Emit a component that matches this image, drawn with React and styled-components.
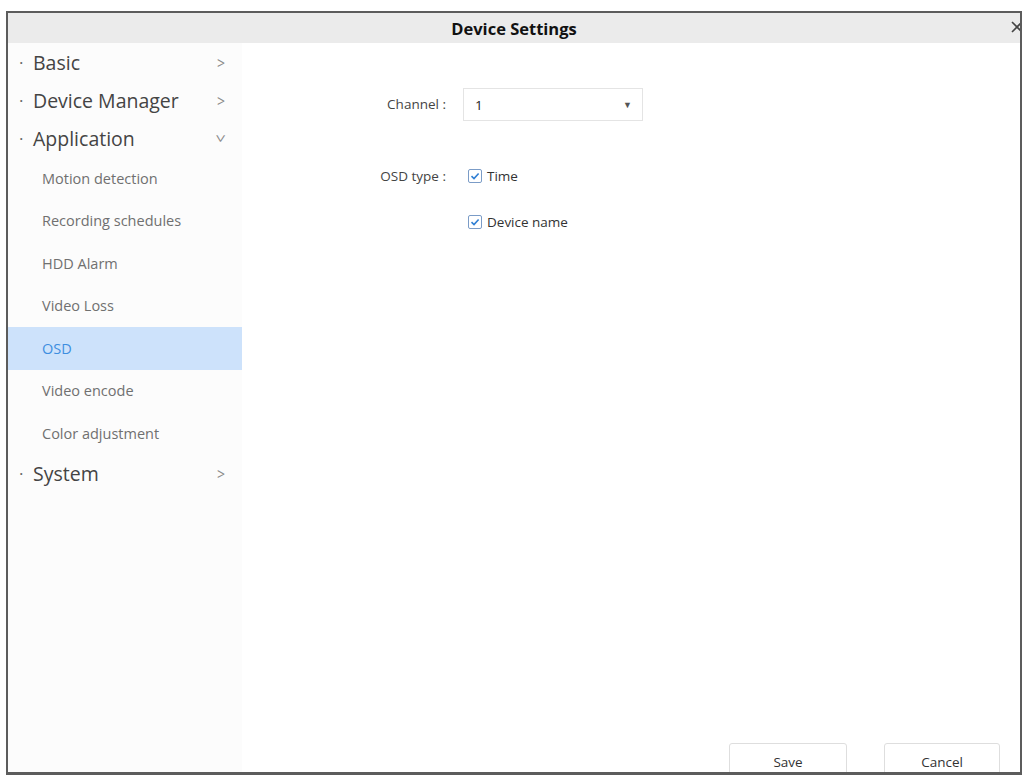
import React from 'react';
import styled, { createGlobalStyle } from 'styled-components';

const Global = createGlobalStyle`
  html, body { margin: 0; padding: 0; background: #fff; }
  body { font-family: "Open Sans", "Noto Sans", sans-serif; }
`;

const Frame = styled.div`
  position: relative;
  margin: 11px 0 0 6px;
  width: 1016px;
  height: 764px;
  box-sizing: border-box;
  border: 2px solid #5c5c5c;
  border-bottom-width: 3px;
  display: flex;
  flex-direction: column;
  overflow: hidden;
  background: #fff;
`;

const Header = styled.div`
  height: 30px;
  flex: none;
  background: #ebebeb;
  display: flex;
  align-items: center;
  justify-content: center;
  font-size: 16.5px;
  font-weight: 700;
  color: #111;
`;

const Close = styled.svg`
  position: absolute;
  top: 7px;
  right: -4px;
`;

const Body = styled.div`
  flex: 1;
  display: flex;
  min-height: 0;
`;

const Sidebar = styled.div`
  width: 234px;
  flex: none;
  background: #fcfcfc;
  display: flex;
  flex-direction: column;
`;

const TopItem = styled.div`
  height: 38px;
  display: flex;
  align-items: center;
  padding-left: 11px;
  padding-right: 16px;
  font-size: 19.5px;
  color: #444;
  span.dot { width: 14px; color: #666; font-size: 17px; }
  span.label { flex: 1; }
`;

const Chevron = styled.span`
  font-size: 14px;
  color: #8a8a8a;
  transform: ${p => (p.open ? 'rotate(90deg) scaleY(1.3)' : 'scaleY(1.2)')};
  width: 10px;
  text-align: center;
`;

const SubItem = styled.div`
  height: 42.5px;
  display: flex;
  align-items: center;
  padding-left: 34px;
  font-size: 14.5px;
  color: ${p => (p.active ? '#3d8ee0' : '#707070')};
  background: ${p => (p.active ? '#cde2fb' : 'transparent')};
`;

const Main = styled.div`
  flex: 1;
  display: flex;
  flex-direction: column;
`;

const Form = styled.div`
  flex: 1;
  padding: 45px 0 0 116px;
  display: grid;
  grid-template-columns: 88px 1fr;
  column-gap: 17px;
  align-content: start;
`;

const Label = styled.div`
  text-align: right;
  font-size: 13.5px;
  color: #444;
  height: ${p => p.h || 20}px;
  line-height: ${p => p.h || 20}px;
  margin-top: ${p => p.mt || 0}px;
`;

const Select = styled.div`
  width: 180px;
  height: 33px;
  box-sizing: border-box;
  border: 1px solid #e4e4e4;
  display: flex;
  align-items: center;
  padding: 0 10px 0 11px;
  font-size: 13.5px;
  color: #222;
  span { flex: 1; }
  i { font-style: normal; font-size: 9px; color: #555; }
`;

const CheckRow = styled.label`
  display: flex;
  align-items: center;
  gap: 5px;
  height: 20px;
  margin-top: ${p => p.mt || 0}px;
  font-size: 13.5px;
  color: #333;
`;

const Box = styled.span`
  width: 12px;
  height: 12px;
  margin-left: 5px;
  border: 1px solid #7b9cc7;
  border-radius: 2px;
  background: #fff;
  display: flex;
  align-items: center;
  justify-content: center;
`;

const Footer = styled.div`
  display: flex;
  justify-content: flex-end;
  gap: 37px;
  padding-right: 20px;
  height: 29px;
  align-items: flex-start;
`;

const Button = styled.div`
  width: ${p => p.w}px;
  height: 36px;
  box-sizing: border-box;
  border: 1px solid #dedede;
  border-radius: 3px;
  display: flex;
  align-items: center;
  justify-content: center;
  font-size: 13.5px;
  color: #333;
  padding-top: 2px;
`;

const Check = () => (
  <Box>
    <svg width="10" height="10" viewBox="0 0 10 10">
      <path d="M1.5 5.2 L4 7.5 L8.6 2.5" fill="none" stroke="#2f7fd4" strokeWidth="1.6" />
    </svg>
  </Box>
);

const top = (label, open) => (
  <TopItem key={label}>
    <span className="dot">·</span>
    <span className="label">{label}</span>
    <Chevron open={open}>&gt;</Chevron>
  </TopItem>
);

const subs = ['Motion detection', 'Recording schedules', 'HDD Alarm', 'Video Loss', 'OSD', 'Video encode', 'Color adjustment'];

export default function App() {
  return (
    <>
      <Global />
      <Frame>
        <Header>Device Settings</Header>
        <Close width="14" height="14" viewBox="0 0 14 14">
          <path d="M2 2 L12 12 M12 2 L2 12" stroke="#444" strokeWidth="1.6" />
        </Close>
        <Body>
          <Sidebar>
            {top('Basic')}
            {top('Device Manager')}
            {top('Application', true)}
            {subs.map(s => (
              <SubItem key={s} active={s === 'OSD'}>{s}</SubItem>
            ))}
            {top('System')}
          </Sidebar>
          <Main>
            <Form>
              <Label h={33}>Channel :</Label>
              <Select><span>1</span><i>▼</i></Select>
              <Label mt={45}>OSD type :</Label>
              <CheckRow mt={45}><Check />Time</CheckRow>
              <div />
              <CheckRow mt={26}><Check />Device name</CheckRow>
            </Form>
            <Footer>
              <Button w={118}>Save</Button>
              <Button w={116}>Cancel</Button>
            </Footer>
          </Main>
        </Body>
      </Frame>
    </>
  );
}
